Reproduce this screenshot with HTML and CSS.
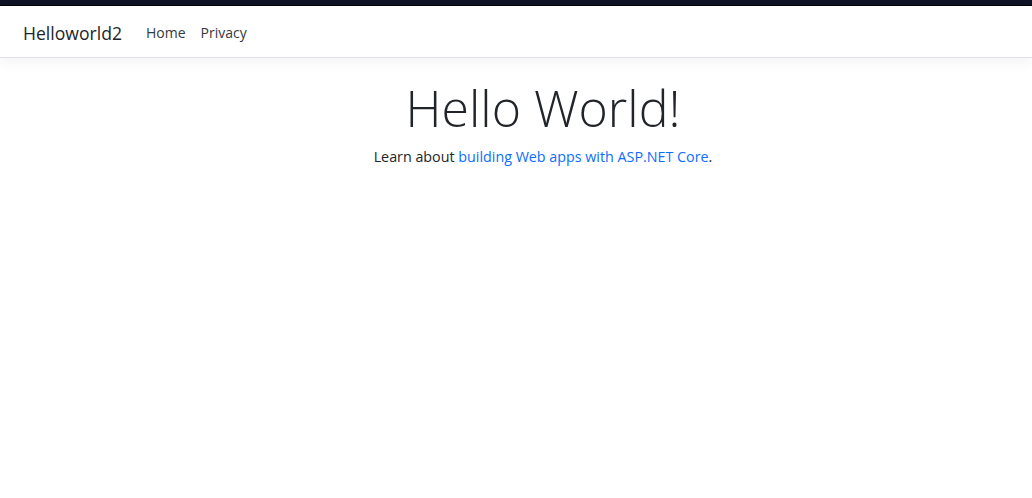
FILE: index.html
```html
<!DOCTYPE html>
<html lang="en">
<head>
<meta charset="utf-8">
<title>Helloworld2</title>
<link rel="stylesheet" href="styles.css">
</head>
<body>
<div class="topstrip"></div>
<header class="navbar">
  <a class="brand" href="#">Helloworld2</a>
  <nav class="navlinks">
    <a class="navlink" href="#">Home</a>
    <a class="navlink" href="#">Privacy</a>
  </nav>
</header>
<main class="content">
  <h1 class="display">Hello World!</h1>
  <p class="lead">Learn about <a class="link" href="#">building Web apps with ASP.NET Core</a>.</p>
</main>
</body>
</html>
```
FILE: styles.css
```css
html, body {
  margin: 0;
  padding: 0;
  background: #fff;
}
body {
  font-family: "Open Sans", "Noto Sans", sans-serif;
  color: #212529;
  font-size: 16px;
}
.topstrip {
  height: 5px;
  background: #0e1325;
  border-bottom: 1px solid #000;
}
.navbar {
  display: flex;
  align-items: center;
  height: 52px;
  padding: 2px 23px 0;
  box-sizing: border-box;
  border-bottom: 1px solid #dee2e6;
  box-shadow: 0 4px 12px rgba(0, 0, 0, 0.05);
  background: #fff;
}
.brand {
  font-size: 17.6px;
  color: #212529;
  text-decoration: none;
  margin-right: 24px;
}
.navlinks {
  display: flex;
  gap: 15px;
}
.navlink {
  font-size: 14px;
  color: #343a40;
  text-decoration: none;
}
.content {
  text-align: center;
  padding: 20px 0 0 54px;
}
.display {
  font-size: 50px;
  font-weight: 300;
  margin: 0;
  line-height: 60px;
  color: #212529;
}
.lead {
  margin: 8px 0 0;
  font-size: 14.3px;
  line-height: 1.5;
}
.link {
  color: #0d6efd;
  text-decoration: none;
}
```
